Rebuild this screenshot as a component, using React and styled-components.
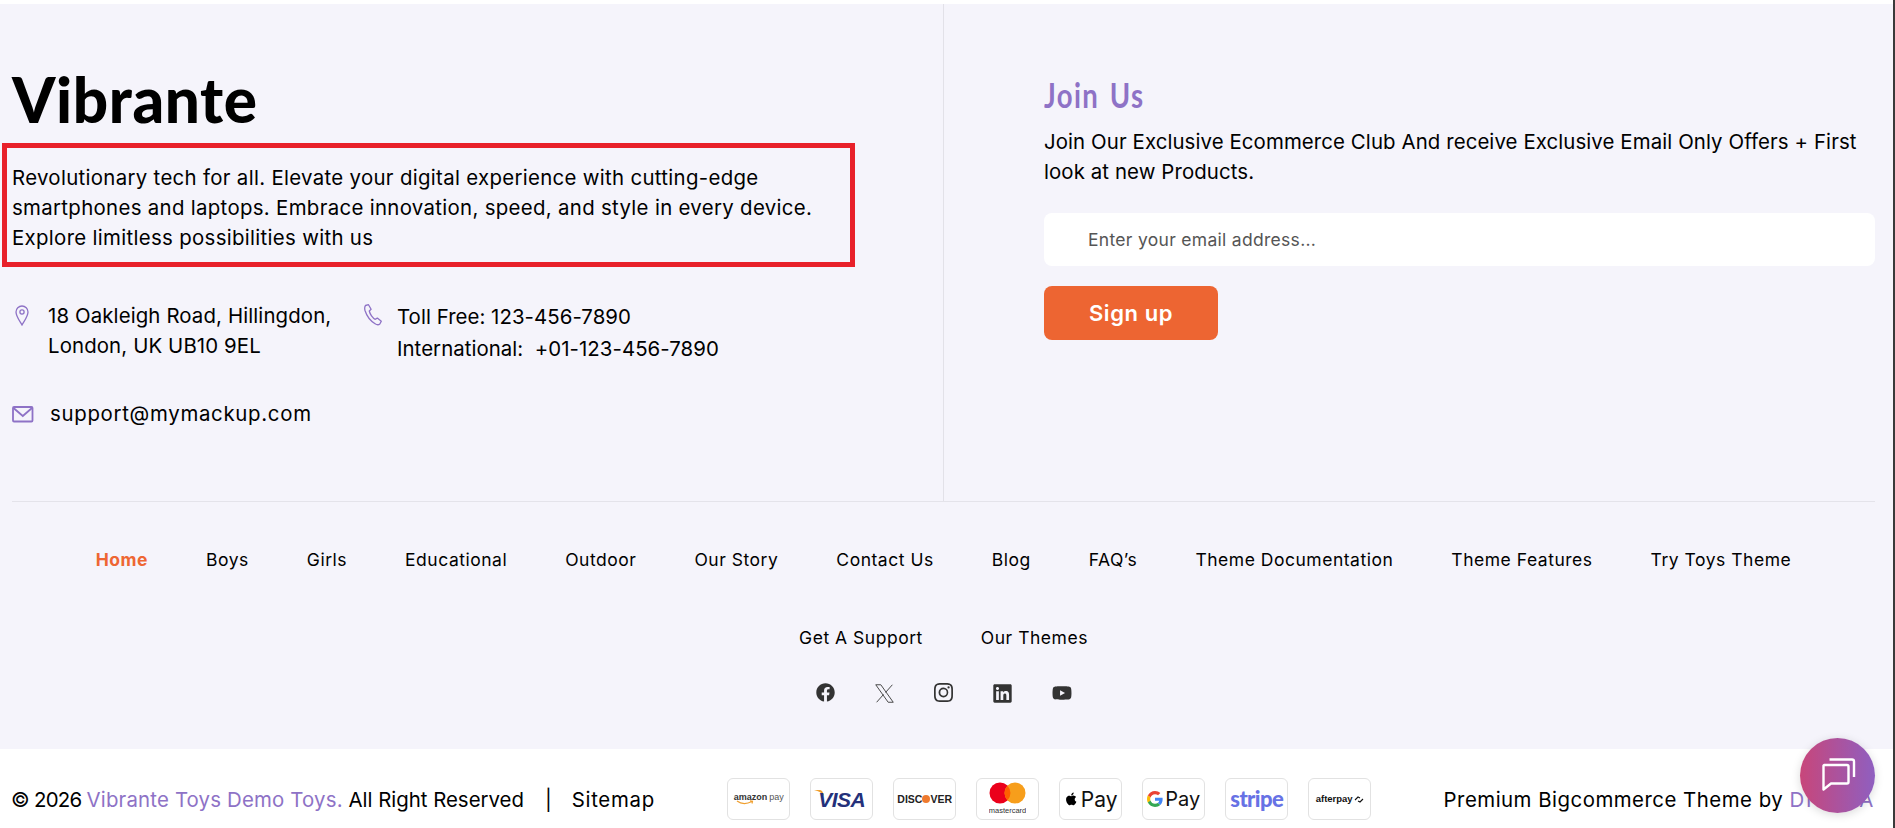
import React from "react";
import styled, { createGlobalStyle } from "styled-components";
import { FaFacebook, FaLinkedin, FaYoutube } from "react-icons/fa";
import { BsInstagram } from "react-icons/bs";

const Global = createGlobalStyle`
  html, body { margin: 0; padding: 0; background: #fff; overflow: hidden; }
  body { font-family: "Inter", "Liberation Sans", sans-serif; color: #000; }
  * { box-sizing: border-box; }
`;

const Page = styled.div`
  height: 828px;
  padding-top: 4px;
  display: flex;
  flex-direction: column;
  border-right: 2px solid #3a3a3a;
`;
const Footer = styled.footer`
  background: #f5f4fb;
  height: 745px;
  padding: 0 18px 0 12px;
  display: flex;
  flex-direction: column;
`;
const Top = styled.div`
  display: flex;
  height: 498px;
  border-bottom: 1px solid #e4e3ea;
`;
const LeftCol = styled.div`
  width: 932px;
  border-right: 1px solid #e2e1e8;
  padding-top: 59px;
`;
const RightCol = styled.div`
  flex: 1;
  padding: 72px 0 0 100px;
`;
const Logo = styled.h2`
  margin: 0;
  font-family: "Lato", sans-serif;
  font-weight: 900;
  font-size: 62px;
  line-height: 72px;
  letter-spacing: 0.6px;
`;
const Annotated = styled.div`
  margin: 8px 0 0 -10px;
  width: 853px;
  height: 124px;
  border: 5px solid #e8202a;
  padding: 15px 0 0 5px;
`;
const Body = styled.p`
  margin: 0;
  font-size: 20.4px;
  line-height: 30px;
  letter-spacing: ${(p) => p.$ls || "0.32px"};
`;
const ContactRow = styled.div`
  display: flex;
  margin-top: 34px;
`;
const Contact = styled.div`
  display: flex;
  align-items: flex-start;
  gap: ${(p) => p.$gap || 17}px;
  width: ${(p) => p.$w || "auto"};
  margin-top: ${(p) => p.$mt || 0}px;
  svg { flex: none; margin-top: ${(p) => p.$iconTop || 3}px; color: #8e72c6; }
`;
const ContactText = styled.div`
  font-size: 20.4px;
  line-height: ${(p) => p.$lh || 30}px;
  letter-spacing: ${(p) => p.$ls || "0"};
`;
const Heading = styled.h3`
  margin: 0;
  display: inline-block;
  font-family: "Lato", sans-serif;
  font-weight: 700;
  font-size: 32px;
  line-height: 38px;
  letter-spacing: 1.6px;
  word-spacing: 3px;
  color: #8e72c6;
  transform: scale(0.86, 1.1);
  transform-origin: left center;
`;
const Desc = styled(Body)`
  margin-top: 13px;
`;
const EmailInput = styled.input`
  display: block;
  width: 100%;
  height: 53px;
  margin-top: 26px;
  border: 0;
  outline: 0;
  border-radius: 8px;
  background: #fff;
  padding: 0 0 0 44px;
  font-family: inherit;
  font-size: 17.5px;
  letter-spacing: 0.3px;
  &::placeholder { color: #555; opacity: 1; }
`;
const SignUp = styled.button`
  display: block;
  width: 174px;
  height: 54px;
  margin-top: 20px;
  border: 0;
  border-radius: 8px;
  background: #ed6532;
  color: #fff;
  font-family: inherit;
  font-weight: 600;
  font-size: 22px;
  letter-spacing: 0.6px;
`;
const Nav = styled.nav`
  display: flex;
  flex-wrap: wrap;
  justify-content: center;
  column-gap: 58px;
  padding: 47px 60px 0;
`;
const NavLink = styled.a`
  height: 78px;
  font-size: 17.5px;
  line-height: 22px;
  letter-spacing: 0.52px;
  font-weight: ${(p) => (p.$active ? 700 : 400)};
  color: ${(p) => (p.$active ? "#ee6633" : "#000")};
`;
const Socials = styled.div`
  display: flex;
  justify-content: center;
  gap: 39px;
  margin-top: -22px;
  color: #333;
`;
const Bottom = styled.div`
  flex: 1;
  display: flex;
  align-items: center;
  justify-content: space-between;
  padding: 21px 18px 0 11px;
  font-size: 20.4px;
`;
const Purple = styled.span`
  color: #8e72c6;
  letter-spacing: ${(p) => p.$ls || "0"};
`;
const Copy = styled.div`
  display: flex;
  white-space: pre;
`;
const Year = styled.span`
  letter-spacing: -0.7px;
`;
const Sep = styled.span`
  margin: 0 20px 0 21px;
`;
const Sitemap = styled.a`
  letter-spacing: 0.7px;
`;
const Credit = styled.div`
  letter-spacing: 0.5px;
`;
const Payments = styled.div`
  display: flex;
  gap: 20px;
`;
const Pay = styled.div`
  width: 63px;
  height: 42px;
  border: 1px solid #e2e2e2;
  border-radius: 6px;
  background: #fff;
  display: flex;
  align-items: center;
  justify-content: center;
  gap: ${(p) => p.$gap ?? 2}px;
  overflow: hidden;
  white-space: nowrap;
`;
const PayText = styled.span`
  font-family: ${(p) => p.$font || '"Liberation Sans", sans-serif'};
  font-size: ${(p) => p.$size}px;
  font-weight: ${(p) => p.$weight || 400};
  font-style: ${(p) => (p.$italic ? "italic" : "normal")};
  color: ${(p) => p.$color || "#111"};
  letter-spacing: ${(p) => p.$ls || "0"};
  line-height: 1;
`;
const AmazonLogo = styled.div`
  display: flex;
  flex-direction: column;
  align-items: flex-start;
  svg { margin: -2px 0 0 2px; }
`;
const AmazonLine = styled.div`
  display: flex;
  gap: 2px;
`;
const Dot = styled.i`
  display: block;
  width: 8px;
  height: 8px;
  border-radius: 50%;
  background: #ee7a2f;
`;
const VisaLogo = styled.div`
  display: flex;
  align-items: flex-start;
  svg { margin: 0 -6px 0 -4px; }
`;
const Chat = styled.button`
  position: fixed;
  right: 20px;
  bottom: 15px;
  width: 75px;
  height: 75px;
  border: 0;
  border-radius: 50%;
  background: linear-gradient(90deg, #c8467a, #8f5fc0);
  box-shadow: 0 2px 10px rgba(0, 0, 0, 0.15);
  display: flex;
  align-items: center;
  justify-content: center;
  padding: 0;
`;

const links = ["Boys","Girls","Educational","Outdoor","Our Story","Contact Us","Blog","FAQ’s","Theme Documentation","Theme Features","Try Toys Theme","Get A Support","Our Themes"];

const Pin = () => (
  <svg width="20" height="22" viewBox="0 0 20 22" fill="none" stroke="currentColor" strokeWidth="1.3">
    <path d="M10 21c-1.6-3-6-8.500-6-13a6 6 0 0 1 12 0c0 4.500-4.400 10-6 13z" /><circle cx="10" cy="8" r="2.100" />
  </svg>
);
const Phone = () => (
  <svg width="22" height="22" viewBox="0 0 22 22" fill="none" stroke="currentColor" strokeWidth="1.3" strokeLinejoin="round">
    <path d="M2.500 1.500l3-.8 2.600 4.600-1.800 1.700c.6 3 3.300 7 6 8.300l2-1.200 4 3.200-1.500 2.700c-1.400 1.200-3.200.8-4.700-.2C7 16.500 3.400 11 2 6.500c-.5-2-.5-3.700.5-5z" />
  </svg>
);
const Mail = () => (
  <svg width="22" height="18" viewBox="0 0 22 18" fill="none" stroke="currentColor" strokeWidth="1.800">
    <rect x="1" y="2" width="19.500" height="14.500" rx="1" /><path d="M1.500 3l9.300 8 9.200-8" />
  </svg>
);
const XLogo = () => (
  <svg width="21" height="21" viewBox="0 0 24 24" fill="none" stroke="#444" strokeWidth="1.100">
    <path d="M2 2h5.800L22 22h-5.800zM21 2l-7.800 8.800M3 22l7.900-8.900" />
  </svg>
);

export default function App() {
  return (
    <Page>
      <Global />
      <Footer>
        <Top>
          <LeftCol>
            <Logo>Vibrante</Logo>
            <Annotated>
              <Body>Revolutionary tech for all. Elevate your digital experience with cutting-edge smartphones and laptops. Embrace innovation, speed, and style in every device. Explore limitless possibilities with us</Body>
            </Annotated>
            <ContactRow>
              <Contact $w="351px" $gap={16}>
                <Pin />
                <ContactText $ls="0.12px">18 Oakleigh Road, Hillingdon,<br />London, UK UB10 9EL</ContactText>
              </Contact>
              <Contact $gap={12}>
                <Phone />
                <ContactText $lh={32} $ls="0.05px">Toll Free: 123-456-7890<br />International:&nbsp; +01-123-456-7890</ContactText>
              </Contact>
            </ContactRow>
            <Contact $mt={34} $gap={16} $iconTop={6}>
              <Mail />
              <ContactText $ls="0.7px">support@mymackup.com</ContactText>
            </Contact>
          </LeftCol>
          <RightCol>
            <Heading>Join Us</Heading>
            <Desc $ls="0.1px">Join Our Exclusive Ecommerce Club And receive Exclusive Email Only Offers + First look at new Products.</Desc>
            <EmailInput placeholder="Enter your email address..." />
            <SignUp>Sign up</SignUp>
          </RightCol>
        </Top>
        <Nav>
          <NavLink $active>Home</NavLink>
          {links.map((l) => <NavLink key={l}>{l}</NavLink>)}
        </Nav>
        <Socials>
          <FaFacebook size={19} />
          <XLogo />
          <BsInstagram size={19} />
          <FaLinkedin size={21} />
          <FaYoutube size={20} />
        </Socials>
      </Footer>
      <Bottom>
        <Copy><Year>© 2026 </Year><Purple $ls="0.17px">Vibrante Toys Demo Toys.</Purple> All Right Reserved<Sep>|</Sep><Sitemap>Sitemap</Sitemap></Copy>
        <Payments>
          <Pay>
            <AmazonLogo>
              <AmazonLine>
                <PayText $size={9} $weight={700} $color="#333">amazon</PayText>
                <PayText $size={9} $color="#555">pay</PayText>
              </AmazonLine>
              <svg width="20" height="5" viewBox="0 0 20 5" fill="none" stroke="#f0a030" strokeWidth="1.200"><path d="M1 1c4 3 10 3 15 .5M14 0.800l2.500.5-.5 2.200" /></svg>
            </AmazonLogo>
          </Pay>
          <Pay>
            <VisaLogo>
              <svg width="10" height="8" viewBox="0 0 10 8"><path d="M0 1h6c2 0 3 2 4 6C8 4 5 2 0 1z" fill="#f0a030" /></svg>
              <PayText $size={21} $weight={700} $italic $color="#24307a" $ls="-0.5px">VISA</PayText>
            </VisaLogo>
          </Pay>
          <Pay $gap={0}>
            <PayText $size={10.500} $weight={700} $color="#222">DISC</PayText>
            <Dot />
            <PayText $size={10.500} $weight={700} $color="#222">VER</PayText>
          </Pay>
          <Pay>
            <svg width="37" height="36" viewBox="0 0 37 36">
              <circle cx="11" cy="12" r="10.500" fill="#eb001b" />
              <circle cx="26" cy="12" r="10.500" fill="#f79e1b" />
              <path d="M18.500 4.700a10.500 10.500 0 0 1 0 14.600a10.500 10.500 0 0 1 0-14.600z" fill="#ff5f00" />
              <text x="18.500" y="32" fontSize="7.500" textAnchor="middle" fill="#333" fontFamily="Liberation Sans">mastercard</text>
            </svg>
          </Pay>
          <Pay>
            <svg width="15" height="18" viewBox="0 0 24 24" fill="#000"><path d="M17.050 12.500c0-2.600 2.100-3.800 2.200-3.900-1.200-1.800-3.100-2-3.700-2-1.600-.2-3.100.9-3.900.9-.8 0-2-.9-3.300-.9-1.700 0-3.300 1-4.200 2.500-1.800 3.100-.5 7.700 1.300 10.200.9 1.200 1.900 2.600 3.200 2.500 1.300 0 1.800-.8 3.300-.8 1.500 0 2 .8 3.300.8 1.400 0 2.300-1.200 3.100-2.500 1-1.400 1.400-2.800 1.400-2.900-.1 0-2.700-1-2.700-3.900zM14.500 4.900c.7-.9 1.200-2 1-3.200-1 0-2.200.7-2.900 1.500-.6.700-1.200 1.900-1 3.100 1.100.1 2.200-.6 2.900-1.400z" /></svg>
            <PayText $size={21} $font="Inter, sans-serif">Pay</PayText>
          </Pay>
          <Pay>
            <svg width="16" height="16" viewBox="0 0 48 48"><path fill="#EA4335" d="M24 9.500c3.500 0 6.700 1.200 9.200 3.600l6.900-6.900C35.900 2.400 30.500 0 24 0 14.600 0 6.500 5.400 2.600 13.300l8 6.200C12.400 13.700 17.700 9.500 24 9.500z" /><path fill="#4285F4" d="M46.900 24.500c0-1.600-.1-3.100-.4-4.500H24v9h12.900c-.6 3-2.200 5.500-4.800 7.200l7.700 6c4.500-4.200 7.100-10.300 7.100-17.700z" /><path fill="#FBBC05" d="M10.500 28.700c-.5-1.500-.8-3-.8-4.700s.3-3.200.8-4.700l-8-6.200C.9 16.500 0 20.100 0 24s.9 7.500 2.600 10.900l7.900-6.200z" /><path fill="#34A853" d="M24 48c6.500 0 11.900-2.100 15.900-5.800l-7.700-6c-2.200 1.500-4.900 2.300-8.200 2.300-6.300 0-11.600-4.200-13.500-10l-8 6.200C6.500 42.600 14.600 48 24 48z" /></svg>
            <PayText $size={20} $font="Inter, sans-serif">Pay</PayText>
          </Pay>
          <Pay><PayText $size={22} $weight={900} $font="Lato, sans-serif" $color="#6772e5" $ls="-0.6px">stripe</PayText></Pay>
          <Pay $gap={1}>
            <PayText $size={9.500} $weight={700} $color="#111">afterpay</PayText>
            <svg width="10" height="9" viewBox="0 0 10 9" fill="none" stroke="#111" strokeWidth="1.100"><path d="M1 5l3-3 2 1M9 4L6 7 4 6" /></svg>
          </Pay>
        </Payments>
        <Credit>Premium Bigcommerce Theme by <Purple $ls="1.7px">DIGITIA</Purple></Credit>
      </Bottom>
      <Chat aria-label="Chat">
        <svg width="46" height="46" viewBox="0 0 46 46" fill="none" stroke="#fff" strokeWidth="2.400" strokeLinejoin="round">
          <path d="M9 12h23a1.500 1.500 0 0 1 1.500 1.500V29A1.500 1.500 0 0 1 32 30.500H16l-7.500 6V12.500z" />
          <path d="M14.500 6.500H37a2 2 0 0 1 2 2V24" />
        </svg>
      </Chat>
    </Page>
  );
}
